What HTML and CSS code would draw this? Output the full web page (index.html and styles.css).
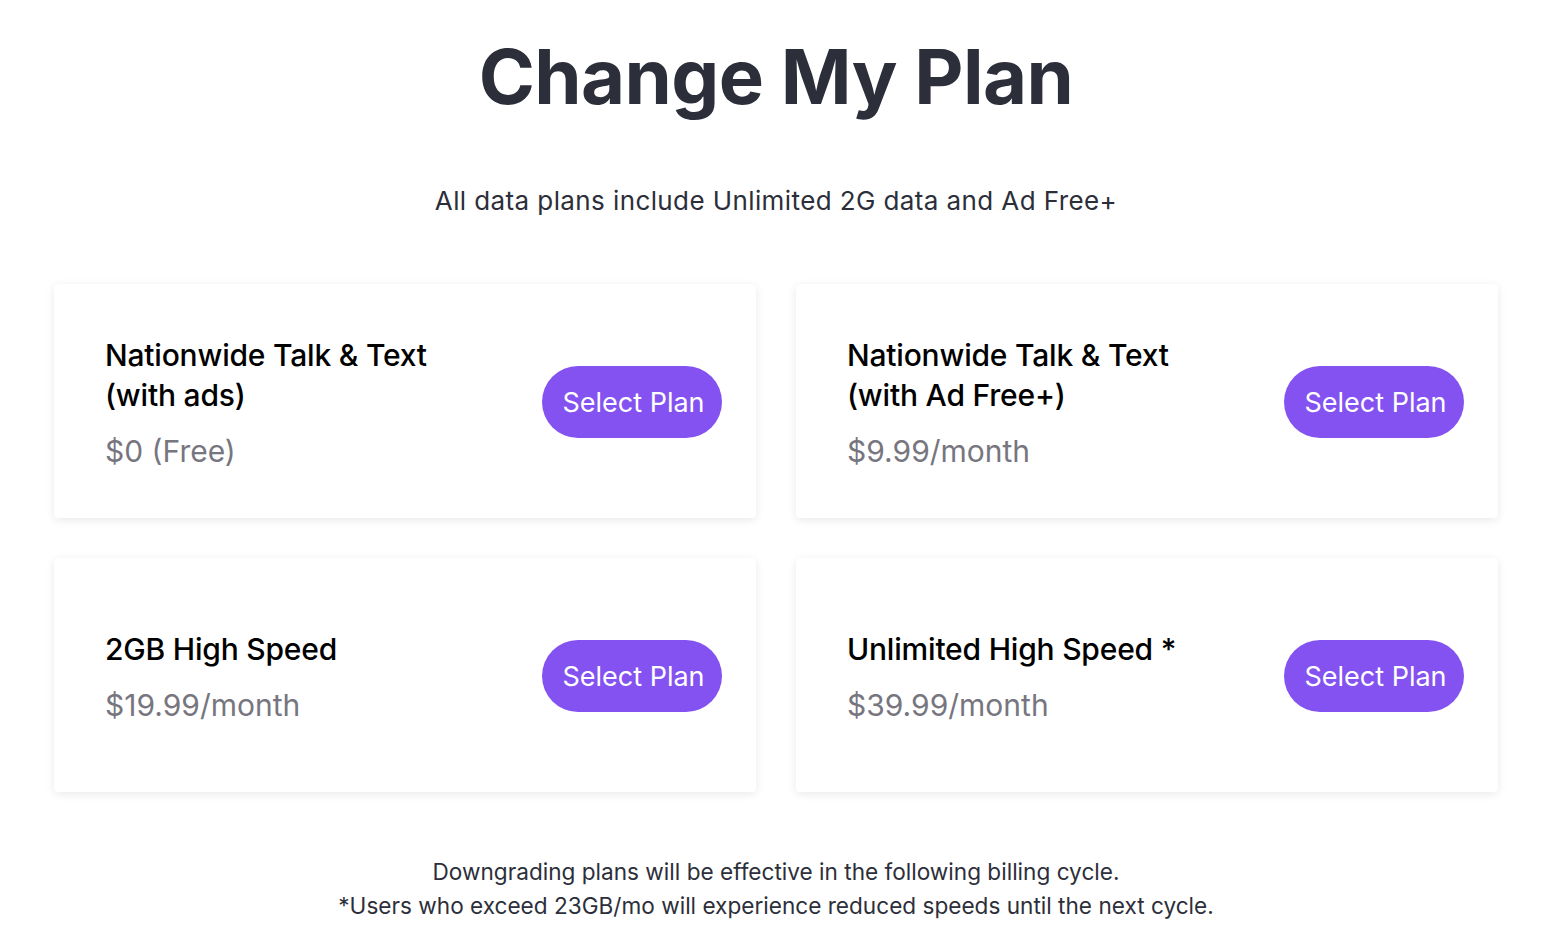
FILE: index.html
```html
<!DOCTYPE html>
<html lang="en">
<head>
<meta charset="utf-8">
<title>Change My Plan</title>
<link rel="stylesheet" href="styles.css">
</head>
<body>
<main class="page">
  <h1 class="title">Change My Plan</h1>
  <p class="subtitle">All data plans include Unlimited 2G data and Ad Free+</p>
  <section class="plans">
    <div class="card">
      <div class="info">
        <div class="name">Nationwide Talk &amp; Text<br>(with ads)</div>
        <div class="price">$0 (Free)</div>
      </div>
      <button class="select">Select Plan</button>
    </div>
    <div class="card">
      <div class="info">
        <div class="name">Nationwide Talk &amp; Text<br>(with Ad Free+)</div>
        <div class="price">$9.99/month</div>
      </div>
      <button class="select">Select Plan</button>
    </div>
    <div class="card">
      <div class="info">
        <div class="name">2GB High Speed</div>
        <div class="price">$19.99/month</div>
      </div>
      <button class="select">Select Plan</button>
    </div>
    <div class="card">
      <div class="info">
        <div class="name">Unlimited High Speed *</div>
        <div class="price">$39.99/month</div>
      </div>
      <button class="select">Select Plan</button>
    </div>
  </section>
  <footer class="notes">
    <p>Downgrading plans will be effective in the following billing cycle.</p>
    <p>*Users who exceed 23GB/mo will experience reduced speeds until the next cycle.</p>
  </footer>
</main>
</body>
</html>
```
FILE: styles.css
```css
html, body {
  margin: 0;
  padding: 0;
  background: #ffffff;
}
body {
  font-family: Inter, "Noto Sans", "Liberation Sans", sans-serif;
  color: #2c2f3a;
}
.page {
  padding: 30px 64px 0 54px;
}
.title {
  margin: 0;
  text-align: center;
  font-size: 76px;
  font-weight: 700;
  line-height: 92px;
  letter-spacing: -0.6px;
  color: #2c2f3a;
}
.subtitle {
  margin: 63px 0 0;
  text-align: center;
  font-size: 26px;
  line-height: 32px;
  letter-spacing: 0.4px;
  color: #2c2f3a;
}
.plans {
  margin-top: 67px;
  display: grid;
  grid-template-columns: 1fr 1fr;
  gap: 40px;
}
.card {
  height: 234px;
  box-sizing: border-box;
  padding: 2px 34px 0 51px;
  display: flex;
  align-items: center;
  justify-content: space-between;
  background: #fff;
  border-radius: 4px;
  box-shadow: 0 2px 10px rgba(0, 0, 0, 0.09);
}
.info {
  padding-top: 2px;
}
.name {
  font-size: 30px;
  font-weight: 500;
  line-height: 40px;
  color: #000;
  letter-spacing: -0.2px;
}
.price {
  margin-top: 16px;
  font-size: 30px;
  line-height: 40px;
  color: #77767f;
}
.select {
  width: 180px;
  height: 72px;
  border: none;
  border-radius: 36px;
  background: #8452f0;
  color: #fff;
  font-family: inherit;
  font-size: 27px;
  font-weight: 400;
  cursor: pointer;
  padding: 0 0 0 3px;
}
.notes {
  margin-top: 63px;
  text-align: center;
  font-size: 22.6px;
  line-height: 34px;
  color: #2c2f3a;
}
.notes p {
  margin: 0;
}
```
